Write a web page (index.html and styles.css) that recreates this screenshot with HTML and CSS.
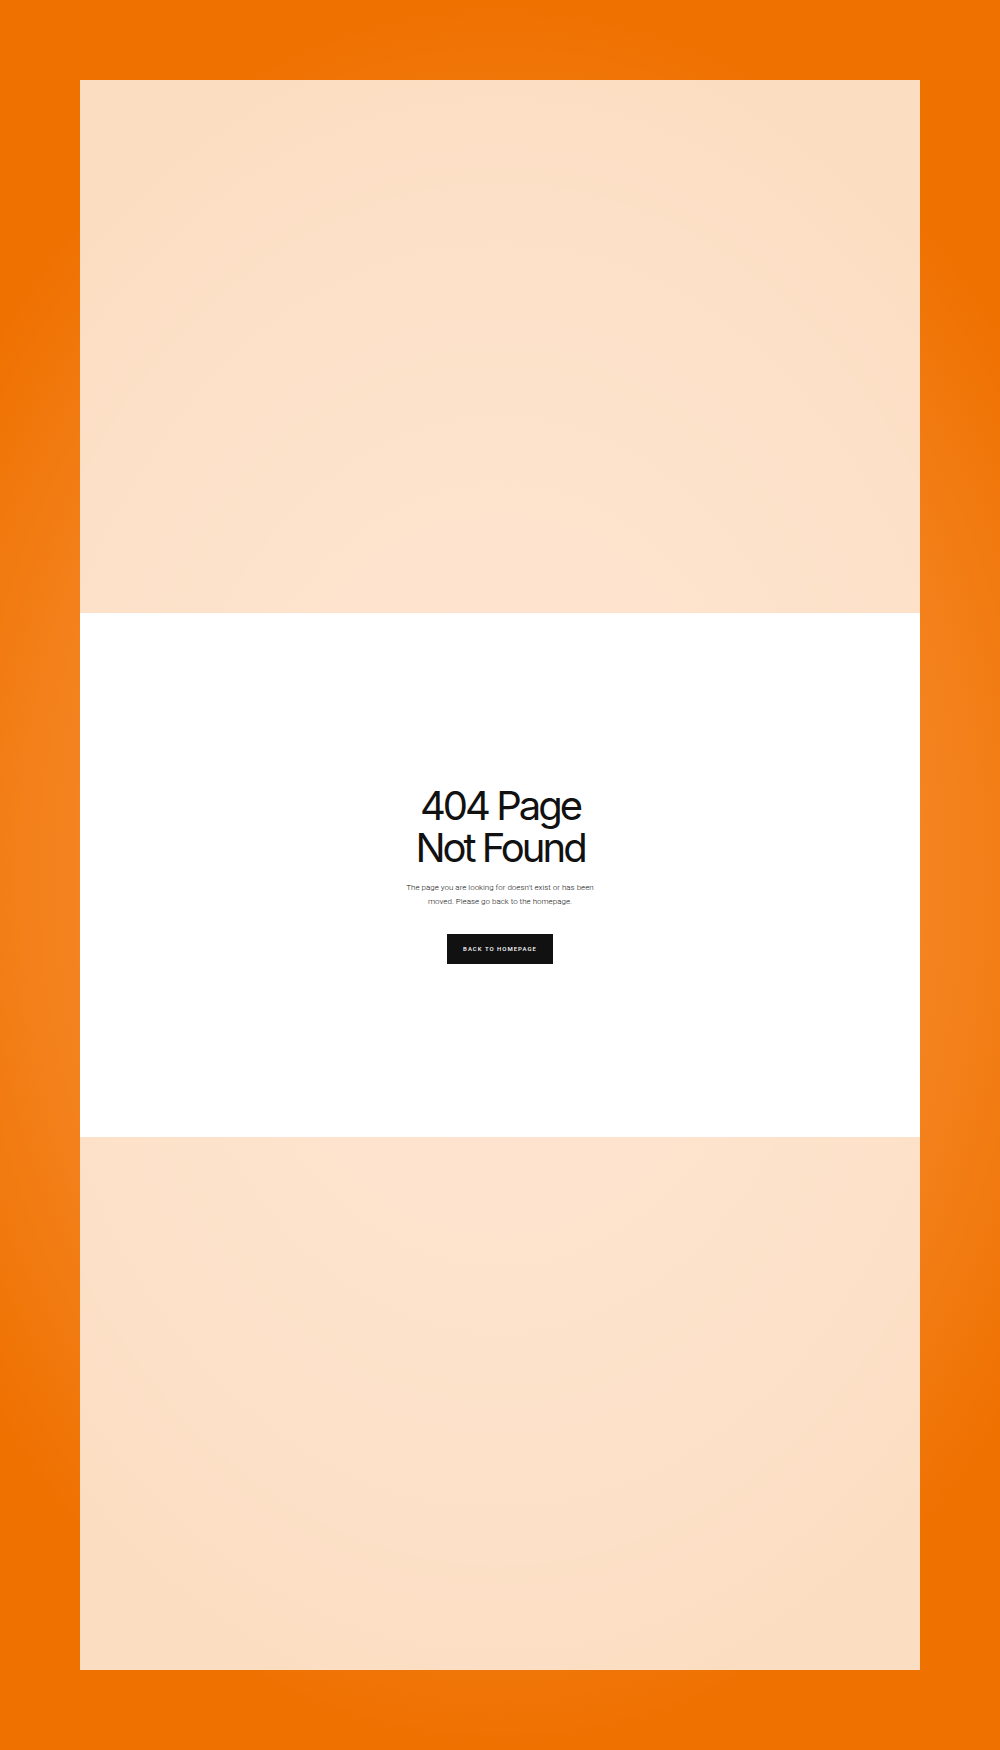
FILE: index.html
```html
<!DOCTYPE html>
<html lang="en">
<head>
<meta charset="utf-8">
<meta name="viewport" content="width=device-width, initial-scale=1">
<title>404 Page Not Found</title>
<link rel="stylesheet" href="styles.css">
</head>
<body>
<div class="frame">
<main class="card">
<h1 class="title">404 Page<br>Not Found</h1>
<p class="message">The page you are looking for doesn't exist or has been moved. Please go back to the homepage.</p>
<a class="button" href="/">Back to homepage</a>
</main>
</div>
</body>
</html>
```

FILE: styles.css
```css
* {
  box-sizing: border-box;
}

body {
  margin: 0;
  min-height: 100vh;
  padding: 80px;
  display: flex;
  background: radial-gradient(ellipse 66% 51% at center, #ff9b50 0%, #f3801a 72%, #ef7100 98%);
  font-family: Inter, "Liberation Sans", sans-serif;
  color: #111;
}

.frame {
  flex: 1;
  display: flex;
  align-items: center;
  background: rgba(255, 255, 255, 0.76);
}

.card {
  width: 100%;
  aspect-ratio: 840 / 524;
  padding-bottom: 2px;
  display: flex;
  flex-direction: column;
  align-items: center;
  justify-content: center;
  text-align: center;
  background: #fff;
}

.title {
  margin: 0 0 12px;
  font-size: 40px;
  line-height: 42px;
  font-weight: 400;
  letter-spacing: -3px;
}

.message {
  width: 200px;
  margin: 0 0 25px;
  font-family: Roboto, sans-serif;
  font-size: 8px;
  line-height: 14px;
  font-weight: 300;
}

.button {
  padding: 8px 16px;
  background: #111;
  color: #fff;
  font-family: Roboto, sans-serif;
  font-size: 6px;
  line-height: 14px;
  font-weight: 500;
  letter-spacing: 1px;
  text-transform: uppercase;
  text-decoration: none;
}
```
